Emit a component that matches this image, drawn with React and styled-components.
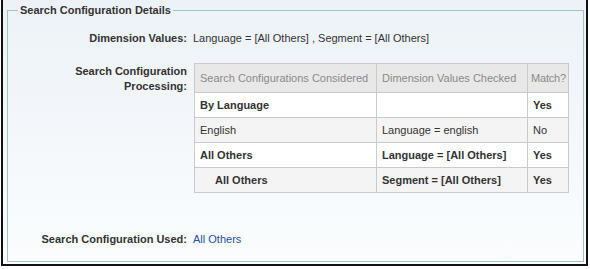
import styled, { createGlobalStyle } from "styled-components";

const Global = createGlobalStyle`
  html, body {
    margin: 0;
    padding: 0;
    background: #ffffff;
  }
  body {
    font-family: "Liberation Sans", Arial, sans-serif;
    font-size: 11px;
    color: #333333;
  }
`;

const Frame = styled.div`
  margin-left: 1px;
  width: 587px;
  height: 266px;
  box-sizing: border-box;
  border: 2px solid #111;
  border-top: none;
  background: linear-gradient(to bottom, #edf2f8 0%, #f4f8fb 55%, #fbfdfe 100%);
`;

const Box = styled.fieldset`
  margin: 0 2px 0 4px;
  height: 262px;
  box-sizing: border-box;
  border: 1px solid #9fc7b8;
  padding: 0 10px 0 10px;
  min-width: 0;
`;

const Legend = styled.legend`
  padding: 0 2px;
  font-weight: bold;
  font-size: 11px;
  line-height: 20px;
  color: #333;
`;

const Row = styled.div`
  display: grid;
  grid-template-columns: 169px 1fr;
  column-gap: 6px;
  align-items: start;
  margin-top: ${(p) => p.$top || 0}px;
`;

const Label = styled.div`
  text-align: right;
  font-weight: bold;
  line-height: 15px;
  color: #333;
`;

const Value = styled.div`
  line-height: 15px;
  color: ${(p) => (p.$link ? "#1f4f9f" : "#333")};
`;

const Table = styled.table`
  border-collapse: collapse;
  table-layout: fixed;
  width: 375px;
  margin-left: 1px;
  background: #fff;
  td, th {
    border: 1px solid #cacaca;
    padding: 0 5px;
    text-align: left;
    white-space: nowrap;
  }
  td:last-child {
    padding: 0 0 0 4px;
  }
  th:last-child {
    padding: 0 0 0 3px;
    letter-spacing: -0.2px;
  }
`;

const Head = styled.th`
  height: 28px;
  background: #e8e8e8;
  color: #8a8a8a;
  font-weight: normal;
`;

const Tr = styled.tr`
  background: ${(p) => (p.$shade ? "#f4f4f4" : "#ffffff")};
`;

const Cell = styled.td`
  height: 24px;
  font-weight: ${(p) => (p.$bold ? "bold" : "normal")};
  padding-left: ${(p) => (p.$indent ? 20 : 5)}px !important;
  color: #333;
`;

const rows = [
  { cfg: "By Language", dim: "", match: "Yes", bold: true },
  { cfg: "English", dim: "Language = english", match: "No", bold: false, shade: true },
  { cfg: "All Others", dim: "Language = [All Others]", match: "Yes", bold: true },
  { cfg: "All Others", dim: "Segment = [All Others]", match: "Yes", bold: true, shade: true, indent: true },
];

export default function App() {
  return (
    <>
      <Global />
      <Frame>
        <Box>
          <Legend>Search Configuration Details</Legend>
          <Row $top={11}>
            <Label>Dimension Values:</Label>
            <Value>Language = [All Others] , Segment = [All Others]</Value>
          </Row>
          <Row $top={17}>
            <Label style={{ paddingTop: 1 }}>
              Search Configuration
              <br />
              Processing:
            </Label>
            <Table>
              <colgroup>
                <col style={{ width: 182 }} />
                <col style={{ width: 151 }} />
                <col style={{ width: 41 }} />
              </colgroup>
              <thead>
                <tr>
                  <Head>Search Configurations Considered</Head>
                  <Head>Dimension Values Checked</Head>
                  <Head>Match?</Head>
                </tr>
              </thead>
              <tbody>
                {rows.map((r, i) => (
                  <Tr key={i} $shade={r.shade}>
                    <Cell $bold={r.bold} $indent={r.indent}>{r.cfg}</Cell>
                    <Cell $bold={r.bold}>{r.dim}</Cell>
                    <Cell $bold={r.bold}>{r.match}</Cell>
                  </Tr>
                ))}
              </tbody>
            </Table>
          </Row>
          <Row $top={39}>
            <Label>Search Configuration Used:</Label>
            <Value $link>All Others</Value>
          </Row>
        </Box>
      </Frame>
    </>
  );
}
